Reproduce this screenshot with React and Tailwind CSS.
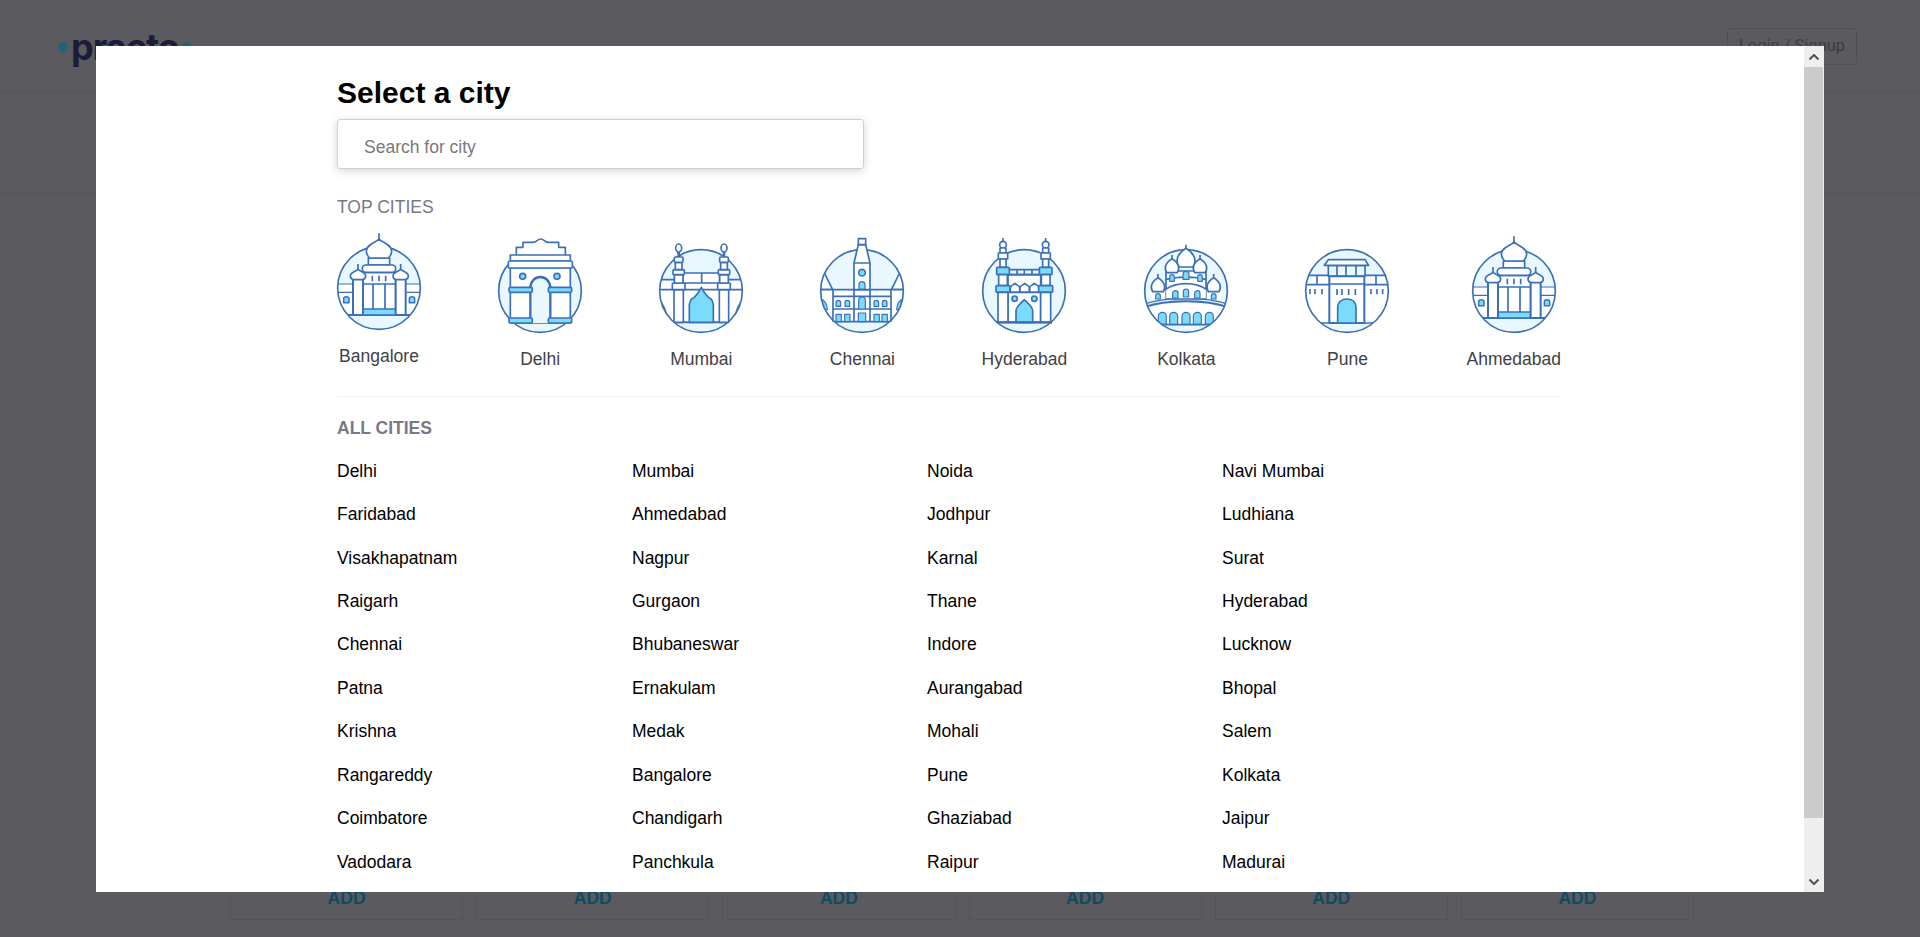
const S = '#3a70b8'
const LIGHT = '#e9f7fe'
const MID = '#7adcfa'

const topCities = [
  ['Bangalore', Palace],
  ['Delhi', IndiaGate],
  ['Mumbai', Gateway],
  ['Chennai', Central],
  ['Hyderabad', Charminar],
  ['Kolkata', Victoria],
  ['Pune', Wada],
  ['Ahmedabad', Palace],
]

const allCities = [
  'Delhi', 'Mumbai', 'Noida', 'Navi Mumbai',
  'Faridabad', 'Ahmedabad', 'Jodhpur', 'Ludhiana',
  'Visakhapatnam', 'Nagpur', 'Karnal', 'Surat',
  'Raigarh', 'Gurgaon', 'Thane', 'Hyderabad',
  'Chennai', 'Bhubaneswar', 'Indore', 'Lucknow',
  'Patna', 'Ernakulam', 'Aurangabad', 'Bhopal',
  'Krishna', 'Medak', 'Mohali', 'Salem',
  'Rangareddy', 'Bangalore', 'Pune', 'Kolkata',
  'Coimbatore', 'Chandigarh', 'Ghaziabad', 'Jaipur',
  'Vadodara', 'Panchkula', 'Raipur', 'Madurai',
]

// every icon is drawn in 3x units with the circle centre at 0,0
// bg stays inside the circle, children may stick out over its edge
function Badge({ id, bg, children }) {
  return (
    <svg width="84" height="100" viewBox="-126 -174 252 300" fill="none" stroke={S} strokeWidth="5" strokeLinejoin="round" className="overflow-visible">
      <defs>
        <clipPath id={id}><circle r="124" /></clipPath>
      </defs>
      <circle r="124" fill={LIGHT} stroke="none" />
      <g clipPath={`url(#${id})`}>{bg}</g>
      <circle r="124" />
      {children}
    </svg>
  )
}

function Palace({ id }) {
  const tower = (x) => (
    <g key={x}>
      <rect x={x - 15} y="-30" width="30" height="111" fill="#fff" strokeWidth="6" />
      <path d={`M${x} -72V-56`} />
      <path d={`M${x} -56C${x - 4} -50 ${x - 23} -48 ${x - 23} -36C${x - 23} -30 ${x - 18} -26 ${x - 14} -25H${x + 14}C${x + 18} -26 ${x + 23} -30 ${x + 23} -36C${x + 23} -48 ${x + 4} -50 ${x} -56Z`} fill="#fff" />
    </g>
  )
  const win = (x) => (
    <path key={x} d={`M${x - 8} 44V32C${x - 8} 27 ${x - 4} 26 ${x} 26C${x + 4} 26 ${x + 8} 27 ${x + 8} 32V44Z`} fill={MID} strokeWidth="4.5" />
  )
  return (
    <Badge
      id={id}
      bg={
        <>
          <rect x="-130" y="-12" width="260" height="93" fill="#fff" stroke="none" />
          <path d="M-130 -12H130M-130 13H130" strokeWidth="3.5" />
          {win(-98)}{win(99)}
          <path d="M-130 81H130" strokeWidth="6" />
        </>
      }
    >
      <rect x="-50" y="-47" width="100" height="128" fill="#fff" />
      <rect x="-50" y="63" width="100" height="18" fill={MID} />
      <path d="M-18 -12V63M18 -12V63M-50 -12H50M-20 -37V-20M0 -37V-20M20 -37V-20" />
      <rect x="-32" y="-90" width="64" height="21" fill="#fff" />
      <rect x="-50" y="-69" width="100" height="22" rx="10" fill="#fff" />
      {tower(-63)}{tower(65)}
      <path d="M0 -164V-147" />
      <path d="M0 -147C-10 -135 -38 -132 -38 -110C-38 -100 -32 -94 -28 -90H28C32 -94 38 -100 38 -110C38 -132 10 -135 0 -147Z" fill="#fff" />
    </Badge>
  )
}

function IndiaGate({ id }) {
  return (
    <Badge id={id}>
      <path d="M-71 -108V-131H-51V-146H-21C-10 -146 -8 -156 2 -156C12 -156 14 -146 24 -146H56V-131H76V-108" fill="#fff" />
      <rect x="-89" y="-70" width="180" height="166" fill="#fff" />
      <rect x="-89" y="-108" width="180" height="18" fill="#fff" />
      <rect x="-95" y="-90" width="192" height="21" rx="4" fill="#fff" />
      <circle cx="-52" cy="-44" r="9" fill={MID} />
      <circle cx="51" cy="-44" r="9" fill={MID} />
      <path d="M-29 96V-8C-29 -30 -14 -42 1 -42C16 -42 31 -30 31 -8V96" fill={LIGHT} strokeWidth="7" />
      <rect x="-93" y="-11" width="70" height="15" rx="4" fill={MID} />
      <rect x="25" y="-11" width="70" height="15" rx="4" fill={MID} />
      <rect x="-93" y="81" width="70" height="15" rx="4" fill={MID} />
      <rect x="25" y="81" width="70" height="15" rx="4" fill={MID} />
    </Badge>
  )
}

function Gateway({ id }) {
  const tower = (x) => (
    <g key={x}>
      <rect x={x - 14} y="-4" width="28" height="98" fill="#fff" />
      <rect x={x - 19} y="-24" width="38" height="20" rx="3" fill="#fff" />
      <rect x={x - 13} y="-49" width="26" height="25" fill="#fff" />
      <rect x={x - 17} y="-64" width="34" height="15" rx="3" fill="#fff" />
      <rect x={x - 10} y="-86" width="20" height="22" fill="#fff" />
      <rect x={x - 13} y="-102" width="26" height="16" rx="3" fill="#fff" />
      <path d={`M${x} -117V-102`} strokeWidth="8" />
      <ellipse cx={x} cy="-129" rx="9" ry="12" fill="#fff" />
    </g>
  )
  return (
    <Badge
      id={id}
      bg={
        <>
          <rect x="-130" y="-34" width="260" height="128" fill="#fff" stroke="none" />
          <path d="M-130 -34H130M-130 -4H130" />
          <path d="M-130 26C-115 35 -102 60 -100 94H-130ZM130 26C115 35 102 60 100 94H130Z" fill={MID} />
          <path d="M-130 94H130" strokeWidth="6" />
        </>
      }
    >
      <path d="M-54 -54H56V-24H-54ZM2 -54V-24" fill="#fff" />
      <path d="M-35 94V40C-35 40 -33 28 -28 24C-15 18 -8 6 1 -11C10 6 17 18 30 24C35 28 37 40 37 40V94Z" fill={MID} />
      {tower(-67)}{tower(69)}
    </Badge>
  )
}

function Central({ id }) {
  const arch = (x, y, w, h) => (
    <path key={`${x}${y}`} d={`M${x - w / 2} ${y + h}V${y + w / 2}A${w / 2} ${w / 2} 0 0 1 ${x + w / 2} ${y + w / 2}V${y + h}Z`} fill={MID} strokeWidth="3.5" />
  )
  const box = (x, w, h) => <rect key={x} x={x - w / 2} y={92 - h} width={w} height={h} fill={MID} strokeWidth="3.5" />
  return (
    <Badge
      id={id}
      bg={
        <>
          <path d="M-116 -60L-88 -4H-130ZM116 -60L88 -4H130Z" fill="#fff" />
          <rect x="-130" y="-4" width="260" height="96" fill="#fff" stroke="none" />
          <path d="M-130 -4H130M-130 92H130" />
          <path d="M-130 22C-120 24 -105 30 -104 56H-130ZM130 22C120 24 105 30 104 56H130Z" fill={MID} strokeWidth="3.5" />
        </>
      }
    >
      <path d="M-87 16H87M-87 54H87M-87 -4V92M87 -4V92" />
      <path d="M-11 -139L-24 -84V-4H24V-84L11 -139Z" fill="#fff" />
      <rect x="-11" y="-157" width="22" height="18" fill="#fff" />
      <path d="M-24 -84H24M-24 -4V92M24 -4V92" />
      <circle cy="-55" r="10" fill={MID} />
      {arch(0, -28, 18, 22)}
      {arch(0, 18, 20, 36)}
      {[-71, -44, 43, 68].map((x) => arch(x, 28, 14, 18))}
      {[-70, -44, 44, 68].map((x) => box(x, 16, 22))}
      {box(0, 22, 26)}
    </Badge>
  )
}

function Charminar({ id }) {
  const tower = (x) => (
    <g key={x}>
      <path d={`M${x} -159V-149`} />
      <circle cx={x} cy="-139" r="10" fill="#fff" />
      <rect x={x - 9} y="-129" width="18" height="15" fill="#fff" />
      <rect x={x - 14} y="-114" width="28" height="18" fill="#fff" />
      <rect x={x - 9} y="-96" width="18" height="25" fill="#fff" />
      <rect x={x - 19} y="-71" width="38" height="22" rx="3" fill={MID} />
      <rect x={x - 13} y="-49" width="26" height="33" fill="#fff" />
      <rect x={x - 21} y="-16" width="42" height="20" rx="3" fill={MID} />
      <rect x={x - 15} y="4" width="30" height="90" fill="#fff" />
    </g>
  )
  const top = (x) => (
    <path key={x} d={`M${x - 14} 4V-10C${x - 14} -16 ${x - 6} -17 ${x} -23C${x + 6} -17 ${x + 14} -16 ${x + 14} -10V4`} fill="#fff" />
  )
  return (
    <Badge id={id}>
      <rect x="-48" y="-49" width="98" height="143" fill="#fff" />
      <path d="M-48 -64H50M-48 -49H50M-21 -64V-49M1 -64V-49M24 -64V-49" />
      {top(-27)}{top(2)}{top(31)}
      <path d="M-48 4H50" strokeWidth="6" />
      <circle cx="-28" cy="23" r="8" fill={MID} />
      <circle cx="31" cy="23" r="8" fill={MID} />
      <path d="M-24 94V58C-24 50 -14 40 1 26C16 40 26 50 26 58V94Z" fill={MID} />
      {tower(-63)}{tower(65)}
      <path d="M-82 94H84" strokeWidth="7" />
    </Badge>
  )
}

function Victoria({ id }) {
  const dome = (x, y, r) => (
    <g key={x}>
      <path d={`M${x} ${y - r - 11}V${y - r}`} />
      <path d={`M${x - 0.75 * r} ${y + r}C${x - 1.15 * r} ${y + 0.4 * r} ${x - r} ${y - 0.4 * r} ${x} ${y - r}C${x + r} ${y - 0.4 * r} ${x + 1.15 * r} ${y + 0.4 * r} ${x + 0.75 * r} ${y + r}Z`} fill="#fff" />
    </g>
  )
  const win = (x, y, w, h) => (
    <path key={`${x}${y}`} d={`M${x - w / 2} ${y + h}V${y + w / 2}A${w / 2} ${w / 2} 0 0 1 ${x + w / 2} ${y + w / 2}V${y + h}Z`} fill={MID} strokeWidth="3.5" />
  )
  return (
    <Badge
      id={id}
      bg={
        <>
          <path d="M-130 50C-60 14 60 14 130 50V101H-130Z" fill="#fff" stroke="none" />
          <path d="M-130 41C-60 16 60 16 130 41" strokeWidth="3.5" />
          <path d="M-130 50C-60 24 60 24 130 50" strokeWidth="6" />
          {[-71, -37, 0, 34, 70].map((x) => win(x, 64, 24, 36))}
          <path d="M-130 101H130" />
        </>
      }
    >
      <rect x="-60" y="-60" width="120" height="60" fill="#fff" />
      <path d="M-62 24V-4C-30 -28 30 -28 62 -4V24Z" fill="#fff" />
      <path d="M-105 -4H-62V24H-105ZM62 -4H105V24H62Z" fill="#fff" stroke="none" />
      {dome(0, -100, 28)}
      {dome(-42, -76, 21)}
      {dome(42, -76, 21)}
      {dome(-84, -19, 21)}
      {dome(83, -19, 21)}
      <path d="M-62 -34C-30 -44 30 -44 62 -34" fill="#fff" />
      {win(0, -59, 18, 24)}{win(-42, -49, 14, 20)}{win(42, -49, 14, 20)}
      {win(-32, -1, 16, 22)}{win(0, -6, 16, 24)}{win(34, -1, 16, 22)}
      {win(-84, 8, 14, 16)}{win(83, 8, 14, 16)}
    </Badge>
  )
}

function Wada({ id }) {
  return (
    <Badge
      id={id}
      bg={
        <>
          <rect x="-130" y="-47" width="260" height="143" fill="#fff" stroke="none" />
          <path d="M-130 -47H130M-90 -47V-19M87 -47V-19M-130 -19H130" />
          <path d="M-111 -6V10M-96 -6V10M-75 -6V10M72 -6V10M90 -6V10M107 -6V10" />
          <path d="M-130 96H130" />
        </>
      }
    >
      <rect x="-56" y="-77" width="110" height="33" fill={LIGHT} />
      <path d="M-30 -77V-44M-3 -77V-44M27 -77V-44" />
      <rect x="-53" y="-44" width="105" height="140" fill="#fff" strokeWidth="6" />
      <path d="M-53 -21H52M-30 -6V12M-15 -6V12M5 -6V12M25 -6V12" />
      <path d="M-68 -77L-56 -94H54L65 -77Z" fill="#fff" />
      <path d="M-28 96V52C-28 32 -14 24 0 24C14 24 27 32 27 52V96Z" fill={MID} />
    </Badge>
  )
}

function ScrollArrow({ up }) {
  return (
    <svg width="10" height="6" viewBox="0 0 10 6" fill="none" stroke="#505050" strokeWidth="2">
      <path d={up ? 'M0.5 5.5L5 1L9.5 5.5' : 'M0.5 0.5L5 5L9.5 0.5'} />
    </svg>
  )
}

function Backdrop() {
  return (
    <div className="flex h-[937px] flex-col overflow-hidden bg-[#5a5a5f]">
      <div className="flex h-[93px] items-start justify-between border-b border-[#55555a] pl-[58px] pr-[63px]">
        <div className="mt-[23px] flex items-center gap-[3px]">
          <span className="h-[10px] w-[10px] rounded-full bg-[#1f6378]" />
          <span className="text-[36px] font-bold leading-[48px] tracking-[-1px] text-[#191d3a] [font-family:Inter,sans-serif]">practo</span>
          <span className="h-[10px] w-[10px] rounded-full bg-[#1f6378]" />
        </div>
        <div className="mt-[28px] flex h-[37px] w-[130px] items-center justify-center rounded-[4px] border border-[#4f4f54] text-[16.5px] text-[#3c3c41] [font-family:Roboto,sans-serif]">
          Login / Signup
        </div>
      </div>
      <div className="h-[101px] border-b border-[#55555a]" />
      <div className="mt-auto mb-[17px] ml-[230px] grid w-[1464px] grid-cols-6 gap-[13px]">
        {[0, 1, 2, 3, 4, 5].map((i) => (
          <div key={i} className="flex h-[60px] items-end justify-center border border-[#545459] pb-[11px] text-[17.5px] font-bold leading-[20px] text-[#124a62]">
            ADD
          </div>
        ))}
      </div>
    </div>
  )
}

export default function App() {
  return (
    <div className="relative h-[937px] overflow-hidden [font-family:'Liberation_Sans',Arial,sans-serif]">
      <Backdrop />
      <div className="absolute left-[96px] top-[46px] flex h-[846px] w-[1728px] bg-white">
        <div className="flex-1 overflow-hidden pl-[241px]">
          <div className="w-[1224px]">
            <h1 className="mt-[30px] h-[34px] text-[30px] font-bold leading-[34px] text-black">Select a city</h1>
            <input
              placeholder="Search for city"
              className="mt-[9px] block h-[50px] w-[527px] rounded-[3px] border border-[#cfcfd4] pb-0 pl-[26px] pt-[6px] text-[17.5px] shadow-[0_2px_8px_rgba(40,44,63,0.2)] outline-none placeholder:text-[#787878]"
            />
            <div className="mt-[28px] text-[17.5px] leading-[20px] text-[#787887]">TOP CITIES</div>
            <div className="mt-[13px] flex items-end justify-between border-b border-[#f0f0f5] pb-[27px]">
              {topCities.map(([name, Icon], i) => (
                <div key={i} className={`flex flex-col items-center ${i === 0 ? 'pb-[3px]' : ''}`}>
                  <Icon id={`c${i}`} />
                  <div className="mt-[16px] text-[17.5px] leading-[20px] text-[#414146]">{name}</div>
                </div>
              ))}
            </div>
            <div className="mt-[21px] text-[17.5px] font-bold leading-[20px] text-[#787887]">ALL CITIES</div>
            <div className="mt-[11px] grid w-[1180px] auto-rows-[43.45px] grid-cols-4 items-center text-[17.5px] leading-[20px] text-black">
              {allCities.map((c, i) => (
                <div key={i}>{c}</div>
              ))}
            </div>
          </div>
        </div>
        <div className="flex w-[20px] flex-col bg-[#eeeeee]">
          <div className="flex h-[21px] items-center justify-center pr-[1px]">
            <ScrollArrow up />
          </div>
          <div className="h-[751px] w-[19px] bg-[#cbcbcb]" />
          <div className="mt-auto flex h-[21px] items-center justify-center pr-[1px]">
            <ScrollArrow />
          </div>
        </div>
      </div>
    </div>
  )
}
